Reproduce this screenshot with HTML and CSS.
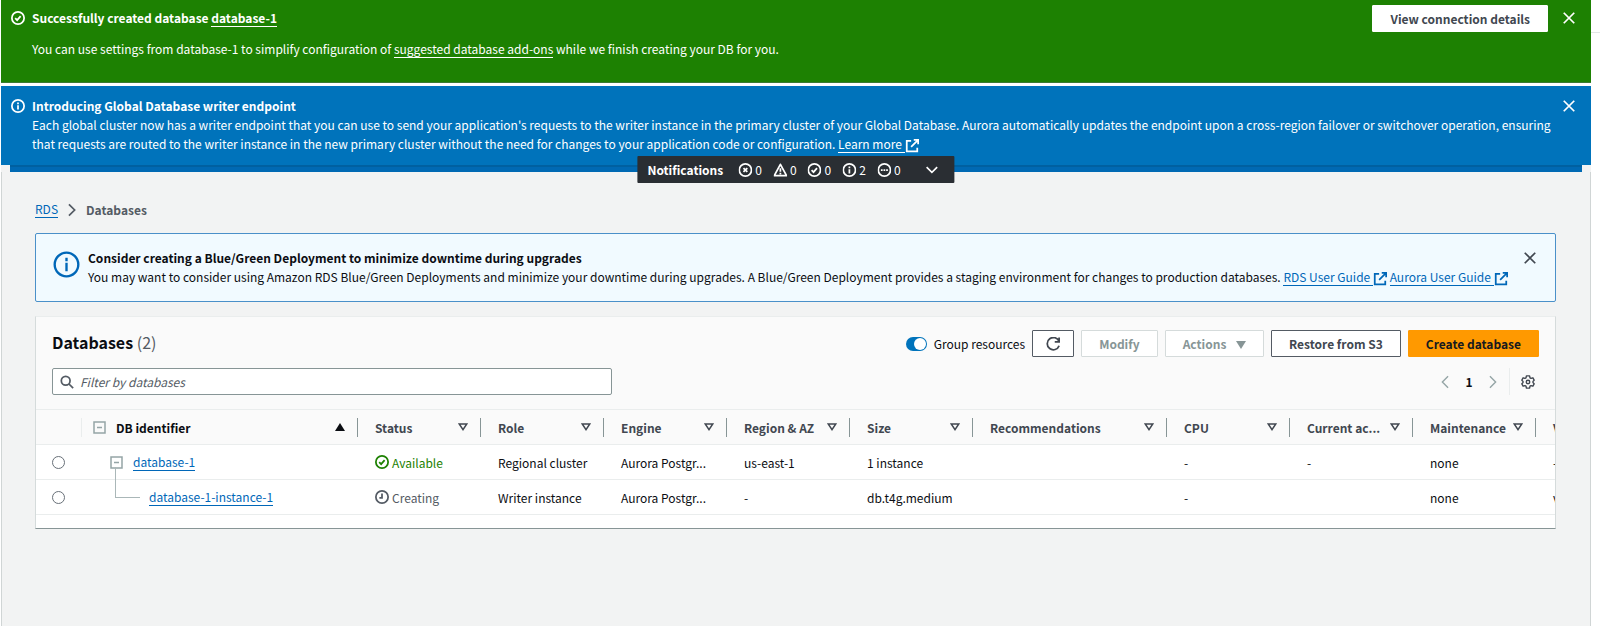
FILE: index.html
```html
<!DOCTYPE html>
<html lang="en">
<head>
<meta charset="utf-8">
<title>RDS - Databases</title>
<link rel="stylesheet" href="styles.css">
</head>
<body>

<!-- ICONS -->
<svg class="sprite" aria-hidden="true">
  <symbol id="i-check" viewBox="0 0 16 16"><circle cx="8" cy="8" r="7"/><path d="M4.8 8.2 7 10.4l4-4.6"/></symbol>
  <symbol id="i-info" viewBox="0 0 16 16"><circle cx="8" cy="8" r="7"/><path d="M8 7v5M8 4v2"/></symbol>
  <symbol id="i-error" viewBox="0 0 16 16"><circle cx="8" cy="8" r="7"/><path d="m5.8 5.8 4.4 4.4m0-4.4-4.4 4.4"/></symbol>
  <symbol id="i-warn" viewBox="0 0 16 16"><path d="M8 1.5 15 14.5H1z" stroke-linejoin="round"/><path d="M8 6v4M8 11v2"/></symbol>
  <symbol id="i-dots" viewBox="0 0 16 16"><circle cx="8" cy="8" r="7"/><path d="M4 8h2m1 0h2m1 0h2"/></symbol>
  <symbol id="i-clock" viewBox="0 0 16 16"><circle cx="8" cy="8" r="7"/><path d="M8 4v5H5"/></symbol>
  <symbol id="i-close" viewBox="0 0 16 16"><path d="m2 2 12 12M14 2 2 14"/></symbol>
  <symbol id="i-ext" viewBox="0 0 16 16"><path d="M7 2H2v12h12v-4M10 1h5v5M15 1 7 9"/></symbol>
  <symbol id="i-down" viewBox="0 0 16 16"><path d="m1.5 4.5 6.5 6.5 6.5-6.5"/></symbol>
  <symbol id="i-left" viewBox="0 0 16 16"><path d="M11.5 1.5 5 8l6.5 6.5"/></symbol>
  <symbol id="i-right" viewBox="0 0 16 16"><path d="M4.5 1.5 11 8l-6.5 6.5"/></symbol>
  <symbol id="i-refresh" viewBox="0 0 16 16"><path d="M10 5.5h5v-5M15 5.2A7 7 0 1 0 15 10"/></symbol>
  <symbol id="i-search" viewBox="0 0 16 16"><circle cx="6.5" cy="6.5" r="5"/><path d="m10 10 5 5"/></symbol>
  <symbol id="i-gear" viewBox="0 0 16 16"><path stroke-linejoin="round" d="M6.2 1h3.6l.5 2.2 1.2.7 2.100-.7L15 5.900l-1.300 1.400v1.400l1.300 1.400-1.400 2.700-2.100-.7-1.200.7-.5 2.200H6.200l-.5-2.200-1.200-.7-2.100.7L1 10.100l1.300-1.400V7.300L1 5.900l1.400-2.700 2.100.7 1.200-.7z"/><circle cx="8" cy="8" r="2"/></symbol>
  <symbol id="i-minus" viewBox="0 0 13 13"><path d="M1 1h11v11H1zM4 6.5h5"/></symbol>
  <symbol id="i-sort" viewBox="0 0 10 8"><path d="M1.200 1h7.600L5 6.600z" stroke-width="1.500"/></symbol>
  <symbol id="i-asc" viewBox="0 0 10 8"><path d="M0 8h10L5 0z" fill="currentColor" stroke="none"/></symbol>
  <symbol id="i-caret" viewBox="0 0 10 8"><path d="M0 0h10L5 8z" fill="currentColor" stroke="none"/></symbol>
</svg>

<div class="page">

  <!-- FLASHBAR -->
  <div class="flashbar">
    <div class="flash flash-success">
      <svg class="icon"><use href="#i-check"/></svg>
      <div class="flash-text">
        <strong>Successfully created database <a href="#">database-1</a></strong>
        <p>You can use settings from database-1 to simplify configuration of <a href="#">suggested database add-ons</a> while we finish creating your DB for you.</p>
      </div>
      <button class="btn btn-flash">View connection details</button>
      <button class="close" aria-label="Dismiss"><svg class="icon"><use href="#i-close"/></svg></button>
    </div>

    <div class="flash flash-info">
      <svg class="icon"><use href="#i-info"/></svg>
      <div class="flash-text">
        <strong>Introducing Global Database writer endpoint</strong><br>
        Each global cluster now has a writer endpoint that you can use to send your application's requests to the writer instance in the primary cluster of your Global Database. Aurora automatically updates the endpoint upon a cross-region failover or switchover operation, ensuring that requests are routed to the writer instance in the new primary cluster without the need for changes to your application code or configuration. <a href="#">Learn more&nbsp;</a><svg class="icon ext"><use href="#i-ext"/></svg>
      </div>
      <button class="close" aria-label="Dismiss"><svg class="icon"><use href="#i-close"/></svg></button>
    </div>
    <div class="flash-stack"></div>

    <button class="notif">
      <strong>Notifications</strong>
      <span class="counts">
        <span><svg class="icon"><use href="#i-error"/></svg>0</span>
        <span><svg class="icon"><use href="#i-warn"/></svg>0</span>
        <span><svg class="icon"><use href="#i-check"/></svg>0</span>
        <span><svg class="icon"><use href="#i-info"/></svg>2</span>
        <span><svg class="icon"><use href="#i-dots"/></svg>0</span>
      </span>
      <svg class="icon notif-arrow"><use href="#i-down"/></svg>
    </button>
  </div>

  <div class="content">
    <nav class="crumbs">
      <a href="#">RDS</a>
      <svg class="icon"><use href="#i-right"/></svg>
      <span>Databases</span>
    </nav>

    <!-- BLUE/GREEN HINT -->
    <div class="alert">
      <svg class="icon icon-big"><use href="#i-info"/></svg>
      <div class="alert-text">
        <strong>Consider creating a Blue/Green Deployment to minimize downtime during upgrades</strong><br>
        You may want to consider using Amazon RDS Blue/Green Deployments and minimize your downtime during upgrades. A Blue/Green Deployment provides a staging environment for changes to production databases. <a href="#">RDS User Guide&nbsp;</a><svg class="icon ext"><use href="#i-ext"/></svg> <a href="#">Aurora User Guide&nbsp;</a><svg class="icon ext"><use href="#i-ext"/></svg>
      </div>
      <button class="close" aria-label="Dismiss"><svg class="icon"><use href="#i-close"/></svg></button>
    </div>

    <!-- DATABASES -->
    <div class="card">
      <div class="card-head">
        <div class="bar">
          <h1>Databases <span>(2)</span></h1>
          <label class="toggle"><input type="checkbox" checked>Group resources</label>
          <button class="btn btn-icon" aria-label="Refresh"><svg class="icon"><use href="#i-refresh"/></svg></button>
          <button class="btn" disabled>Modify</button>
          <button class="btn" disabled>Actions <svg class="tri caret"><use href="#i-caret"/></svg></button>
          <button class="btn">Restore from S3</button>
          <button class="btn btn-primary">Create database</button>
        </div>
        <div class="bar">
          <div class="search">
            <svg class="icon"><use href="#i-search"/></svg>
            <input type="text" placeholder="Filter by databases" aria-label="Filter by databases">
          </div>
          <div class="pager">
            <button aria-label="Previous page" disabled><svg class="icon"><use href="#i-left"/></svg></button>
            <button class="current">1</button>
            <button aria-label="Next page" disabled><svg class="icon"><use href="#i-right"/></svg></button>
            <button class="prefs" aria-label="Preferences"><svg class="icon"><use href="#i-gear"/></svg></button>
          </div>
        </div>
      </div>

      <div class="table-wrap">
        <table>
          <colgroup>
            <col class="c-pick"><col class="c-id"><col><col><col><col><col><col class="c-rec"><col><col><col><col>
          </colgroup>
          <thead>
            <tr>
              <th class="pick"><div class="th"></div></th>
              <th class="id sorted"><div class="th"><svg class="box"><use href="#i-minus"/></svg><span>DB identifier</span><svg class="tri"><use href="#i-asc"/></svg></div></th>
              <th><div class="th"><span>Status</span><svg class="tri"><use href="#i-sort"/></svg></div></th>
              <th><div class="th"><span>Role</span><svg class="tri"><use href="#i-sort"/></svg></div></th>
              <th><div class="th"><span>Engine</span><svg class="tri"><use href="#i-sort"/></svg></div></th>
              <th><div class="th"><span>Region &amp; AZ</span><svg class="tri"><use href="#i-sort"/></svg></div></th>
              <th><div class="th"><span>Size</span><svg class="tri"><use href="#i-sort"/></svg></div></th>
              <th><div class="th"><span>Recommendations</span><svg class="tri"><use href="#i-sort"/></svg></div></th>
              <th><div class="th"><span>CPU</span><svg class="tri"><use href="#i-sort"/></svg></div></th>
              <th><div class="th"><span>Current ac...</span><svg class="tri"><use href="#i-sort"/></svg></div></th>
              <th><div class="th"><span>Maintenance</span><svg class="tri"><use href="#i-sort"/></svg></div></th>
              <th><div class="th"><span>VPC</span></div></th>
            </tr>
          </thead>
          <tbody>
            <tr>
              <td class="pick"><input type="radio" name="db" aria-label="database-1"></td>
              <td class="id"><div class="node"><svg class="box"><use href="#i-minus"/></svg><a href="#">database-1</a></div></td>
              <td><span class="status ok"><svg class="icon"><use href="#i-check"/></svg>Available</span></td>
              <td>Regional cluster</td>
              <td>Aurora Postgr...</td>
              <td>us-east-1</td>
              <td>1 instance</td>
              <td></td>
              <td>-</td>
              <td>-</td>
              <td>none</td>
              <td>-</td>
            </tr>
            <tr>
              <td class="pick"><input type="radio" name="db" aria-label="database-1-instance-1"></td>
              <td class="id"><div class="node child"><a href="#">database-1-instance-1</a></div></td>
              <td><span class="status wait"><svg class="icon"><use href="#i-clock"/></svg>Creating</span></td>
              <td>Writer instance</td>
              <td>Aurora Postgr...</td>
              <td>-</td>
              <td>db.t4g.medium</td>
              <td></td>
              <td>-</td>
              <td></td>
              <td>none</td>
              <td>vpc</td>
            </tr>
          </tbody>
        </table>
      </div>
    </div>
  </div>
</div>

<div class="side"></div>

</body>
</html>
```
FILE: styles.css
```css
* {box-sizing:border-box;}

body {
  margin:0; min-height:100vh; display:flex;
  font-family:"Noto Sans CJK SC", "Open Sans", sans-serif;
  font-size:12px; line-height:19px;
  color:#0b0d12; background:#fff;
}

button, input {font:inherit; color:inherit;}
button {padding:0; border:0; background:none; cursor:pointer;}
button:disabled {cursor:default;}
p {margin:0;}
a {color:#0067b8; text-decoration:none; border-bottom:1px solid;}

.sprite {display:none;}
.icon {
  width:14px; height:14px; flex:none; display:block;
  fill:none; stroke:currentColor; stroke-width:2;
}
.ext {display:inline-block; vertical-align:-2px; margin-bottom:-2px;}
.alert .ext {color:#0067b8;}

/* page frame */
.page {
  flex:1; min-width:0; margin-left:1px;
  background:#f2f3f3; border-left:1px solid #d0d5d5; border-right:1px solid #d0d5d5;
}
.side {width:9px; height:33px; border-bottom:1px solid #e3e6e6;}

/* flashbar */
.flashbar {position:relative; color:#fff; margin:0 -1px; background:#fff;}
.flashbar a {color:#fff;}
.flash {display:flex; align-items:flex-start; padding-left:10px; padding-right:15px;}
.flash > .icon {margin-top:3px;}
.flash-text {flex:1; margin:0 6px 0 7px;}
.flash-success {background:#1d8102; padding-top:8px; padding-bottom:24px; margin-bottom:3px; border-bottom:1px solid #3b7a32;}
.flash-success p {margin-top:12px;}
.flash-info {background:#0073bb; padding-top:10px; padding-bottom:12px;}
.flash-stack {
  height:7px; background:#0069b3;
  border:solid #f2f3f3; border-width:0 9px;
  box-shadow:inset 0 2px #0060a0;
}
.close {width:14px; height:20px; display:flex; align-items:center;}

.notif {
  position:absolute; left:50%; bottom:-11px; transform:translateX(-50%);
  height:27px; padding:0 16px 0 10px; white-space:nowrap;
  display:flex; align-items:center; background:#2a2e33; color:#fff; border-radius:1px;
}
.counts {display:flex; gap:11px; margin:0 25px 0 15px;}
.counts span {display:flex; align-items:center; gap:3px;}
.notif-arrow {width:13px;}

/* buttons */
.btn {
  height:27px; padding:0 17px; border:1px solid #545b64; border-radius:1px;
  background:#fff; color:#414750; font-weight:bold; white-space:nowrap;
}
.btn:disabled {border-color:#d5dbdb; color:#879596;}
.btn-primary {background:#ff9900; border-color:#ff9900; color:#16191f;}
.btn-icon {padding:0 13px;}
.btn-flash {margin:-3px 14px 0 0; border-color:#fff;}
.tri {width:10px; height:8px; flex:none; fill:none; stroke:currentColor;}
.caret {margin-left:7px;}

/* content */
.content {padding:28px 34px 0 33px;}
.crumbs {display:flex; align-items:center; gap:7px; font-weight:bold; color:#545b64; margin-bottom:14px;}
.crumbs a {font-weight:normal; line-height:16px;}

.alert {
  display:flex; align-items:flex-start; padding:14px 18px 15px 17px;
  background:#f1faff; border:1px solid #4a90c9; border-radius:2px; margin-bottom:14px;
}
.icon-big {width:27px; height:27px; margin-top:3px; color:#0067b8; stroke-width:1.4px;}
.alert-text {flex:1; margin:0 6px 0 8px;}
.alert .close {color:#414750;}

.card {
  background:#fff; border:1px solid #d5dbdb; border-top-color:#eaeded;
  border-bottom-color:#879596; padding-bottom:13px;
}
.card-head {background:#fafafa; padding:13px 16px 14px; display:grid; gap:11px;}
.bar {display:flex; align-items:center; gap:7px;}
h1 {flex:1; margin:0; font-size:16px; line-height:24px; align-self:flex-start;}
h1 span {font-weight:normal; color:#545b64;}

.toggle {display:flex; align-items:center; gap:7px;}
.toggle input {
  appearance:none; margin:0; width:21px; height:14px; border-radius:7px;
  background:#0073bb; display:flex; justify-content:flex-end; padding:1px;
}
.toggle input::before {content:""; width:12px; height:12px; border-radius:50%; background:#fff;}

.search {
  width:560px; height:27px; display:flex; align-items:center; gap:6px; padding:0 7px;
  background:#fff; border:1px solid #879596; border-radius:2px; color:#545b64;
}
.search input {flex:1; min-width:0; border:0; padding:0; outline:0; background:none;}
.search input::placeholder {color:#545b64; font-style:italic; opacity:1;}

.pager {margin-left:auto; display:flex; align-items:center; color:#414750;}
.pager button:disabled {color:#95a5a6;}
.pager .icon {stroke-width:1.6px;}
.pager .current {width:34px; font-weight:bold; color:#0b0d12;}
.pager .prefs {height:27px; margin-left:9px; padding:0 4px 0 11px; border-left:1px solid #eaeded;}

/* table */
.table-wrap {overflow-x:auto; scrollbar-width:none;}
table {width:1622px; table-layout:fixed; border-collapse:separate; border-spacing:0;}
col {width:123px;}
.c-pick {width:46px;}
.c-id {width:276px;}
.c-rec {width:194px;}
th, td {height:35px; padding:0 0 0 17px; text-align:left; white-space:nowrap; border-bottom:1px solid #eaeded;}
th {height:36px; background:#fafafa; color:#414750; border-top:1px solid #eaeded;}
.sorted {color:#0b0d12;}
.th {display:flex; align-items:center; height:19px; padding-right:12px; border-right:1px solid #879596;}
.th .tri {margin-left:auto;}
.pick {padding-left:16px;}
.pick .th {border-color:#eaeded;}
.pick input {
  appearance:none; display:block; margin:0; width:13px; height:13px;
  border:1px solid #687078; border-radius:50%; background:#fff;
}
.id {padding-left:11px;}
.box {width:13px; height:13px; flex:none; margin-right:10px; fill:none; stroke:#95a5a6; stroke-width:1.5px;}
.node {display:flex; align-items:center; padding-left:17px; position:relative;}
.node a {line-height:16px;}
.child {padding-left:56px;}
.child::before {
  content:""; position:absolute; left:22px; bottom:8px; width:24px; height:30px;
  border:solid #aab7b8; border-width:0 0 1px 1px;
}
.status {display:flex; align-items:center; gap:3px;}
.ok {color:#1d8102;}
.wait {color:#545b64;}
```
